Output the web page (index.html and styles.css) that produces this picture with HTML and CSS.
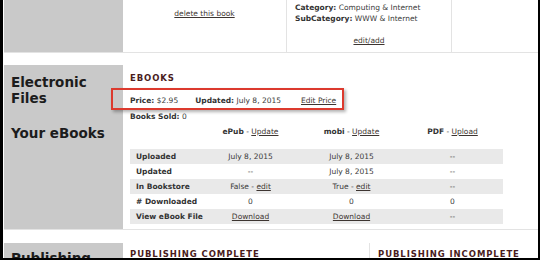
FILE: index.html
```html
<!DOCTYPE html>
<html>
<head>
<meta charset="utf-8">
<link rel="stylesheet" href="styles.css">
</head>
<body>
<div class="frame">
  <section class="section s1">
    <div class="side"></div>
    <div class="main cols3">
      <div class="cell center"><a href="#">delete this book</a></div>
      <div class="cell cat">
        <div><b>Category:</b> Computing &amp; Internet</div>
        <div><b>SubCategory:</b> WWW &amp; Internet</div>
        <div class="center editadd"><a href="#">edit/add</a></div>
      </div>
      <div class="cell last"></div>
    </div>
  </section>

  <section class="section s2">
    <div class="side">
      <h2 class="side-title">Electronic<br>Files</h2>
      <h2 class="side-title second">Your eBooks</h2>
    </div>
    <div class="main ebooks">
      <h3 class="title">EBOOKS</h3>
      <div class="price-row">
        <span class="item i1"><b>Price:</b> $2.95</span>
        <span class="item i2"><b>Updated:</b> July 8, 2015</span>
        <a href="#">Edit Price</a>
      </div>
      <div class="annot"></div>
      <div class="sold"><b>Books Sold:</b> 0</div>
      <div class="grid head">
        <span></span>
        <span class="c"><b>ePub</b> - <a href="#">Update</a></span>
        <span class="c"><b>mobi</b> - <a href="#">Update</a></span>
        <span class="c"><b>PDF</b> - <a href="#">Upload</a></span>
      </div>
      <div class="table">
        <div class="grid row alt">
          <b class="lbl">Uploaded</b><span class="c">July 8, 2015</span><span class="c">July 8, 2015</span><span class="c">--</span>
        </div>
        <div class="grid row">
          <b class="lbl">Updated</b><span class="c">--</span><span class="c">July 8, 2015</span><span class="c">--</span>
        </div>
        <div class="grid row alt">
          <b class="lbl">In Bookstore</b><span class="c">False - <a href="#">edit</a></span><span class="c">True - <a href="#">edit</a></span><span class="c">--</span>
        </div>
        <div class="grid row">
          <b class="lbl"># Downloaded</b><span class="c">0</span><span class="c">0</span><span class="c">0</span>
        </div>
        <div class="grid row alt">
          <b class="lbl">View eBook File</b><span class="c"><a href="#">Download</a></span><span class="c"><a href="#">Download</a></span><span class="c">--</span>
        </div>
      </div>
    </div>
  </section>

  <section class="section s3">
    <div class="side">
      <h2 class="side-title">Publishing</h2>
    </div>
    <div class="main cols2">
      <div class="cell"><h3 class="title">PUBLISHING COMPLETE</h3></div>
      <div class="cell right"><h3 class="title">PUBLISHING INCOMPLETE</h3></div>
    </div>
  </section>
</div>
</body>
</html>
```

FILE: styles.css
```css
html, body {
  margin: 0;
  padding: 0;
  background: #fff;
}
body {
  width: 540px;
  height: 260px;
  overflow: hidden;
  font-family: "DejaVu Sans", Verdana, sans-serif;
  font-size: 7.5px;
  line-height: 11px;
  color: #3a3a3a;
}
a {
  color: #3d3531;
  text-decoration: underline;
}
b { color: #333; }
.frame {
  height: 260px;
  box-sizing: border-box;
  border-left: 3px solid #000;
  border-right: 2px solid #000;
  border-bottom: 2px solid #000;
  padding-left: 1px;
  overflow: hidden;
}
.section {
  display: grid;
  grid-template-columns: 119px 1fr;
  border-bottom: 1px solid #e3e3e3;
}
.side {
  background: #c9c9c9;
  padding-left: 7px;
}
.s1 { height: 53px; box-sizing: border-box; }
.s2 { height: 165px; box-sizing: border-box; margin-top: 12px; }
.s3 { margin-top: 13px; height: 30px; border-bottom: none; }

.cols3 {
  display: grid;
  grid-template-columns: 164px 165px 1fr;
}
.cell { border-right: 1px solid #e3e3e3; }
.cell.last, .cell.right { border-right: none; }
.center { text-align: center; }
.s1 .cell.center { padding-top: 8px; }
.cat { padding: 2px 0 0 8px; }
.editadd { margin-top: 11px; padding-right: 8px; }

.side-title {
  margin: 0;
  font-size: 13.5px;
  line-height: 16px;
  font-weight: bold;
  color: #1c1c1c;
}
.s2 .side { padding-top: 9px; }
.side-title.second { margin-top: 19px; }

.main { position: relative; }
.ebooks { padding: 7px 0 0 7px; }
.title {
  margin: 0;
  font-size: 8.5px;
  line-height: 12px;
  letter-spacing: 0.9px;
  font-weight: bold;
  color: #4a1d1d;
}
.price-row {
  margin-top: 11px;
  line-height: 12px;
  display: flex;
}
.item.i1 { margin-right: 17px; }
.item.i2 { margin-right: 20px; }
.annot {
  position: absolute;
  left: -12px;
  top: 23px;
  width: 233px;
  height: 22px;
  box-sizing: border-box;
  border: 2px solid #dc3a2e;
  box-shadow: 2px 2px 3px rgba(0,0,0,0.3);
}
.sold { margin-top: 4px; line-height: 12px; }
.grid {
  display: grid;
  grid-template-columns: 70px 101px 101px 101px;
  width: 373px;
}
.head { margin-top: 3px; line-height: 12px; }
.c { text-align: center; }
.table { margin-top: 11px; }
.row { height: 15px; line-height: 15px; }
.row.alt { background: #e9e9e9; }
.lbl { padding-left: 6px; white-space: nowrap; }

.s3 .side { padding-top: 7px; }
.cols2 {
  display: grid;
  grid-template-columns: 247px 1fr;
}
.cols2 .cell { padding: 5px 0 0 7px; }
.cols2 .cell.right { padding-left: 8px; }
```
